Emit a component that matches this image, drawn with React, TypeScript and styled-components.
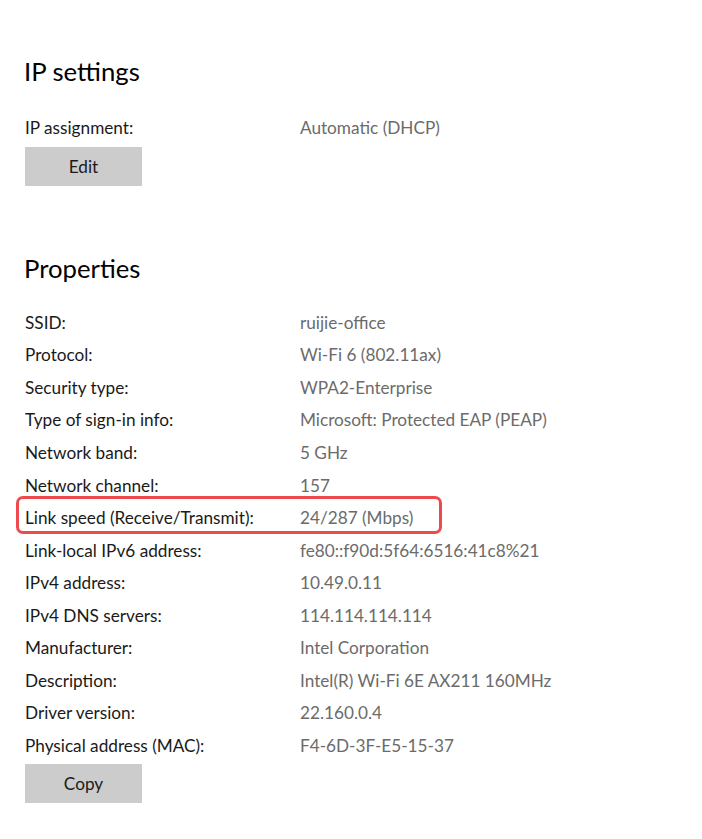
import styled, { createGlobalStyle } from "styled-components";

const GlobalStyle = createGlobalStyle`
  html, body {
    margin: 0;
    padding: 0;
    background: #ffffff;
  }
  body {
    font-family: Lato, "Open Sans", "Liberation Sans", sans-serif;
    color: #000000;
  }
`;

const Page = styled.div`
  padding: 53px 0 40px 25px;
  width: 702px;
  box-sizing: border-box;
`;

const Section = styled.section<{ $gap?: number }>`
  margin-bottom: ${(p) => p.$gap ?? 0}px;
`;

const Heading = styled.h2`
  margin: 0 0 0 -1px;
  font-size: 25.7px;
  font-weight: 400;
  line-height: 36px;
  height: 36px;
  color: #000;
`;

const Rows = styled.div<{ $top: number }>`
  display: flex;
  flex-direction: column;
  margin-top: ${(p) => p.$top}px;
`;

const Row = styled.div`
  position: relative;
  display: grid;
  grid-template-columns: 275px 1fr;
  height: 32.55px;
  align-items: center;
  font-size: 17.2px;
  padding-top: 1px;
  box-sizing: border-box;
`;

const Label = styled.span`
  color: #1a1a1a;
  position: relative;
`;

const Value = styled.span`
  color: #6b6b6b;
  position: relative;
`;

const Highlight = styled.div`
  position: absolute;
  left: -9px;
  top: -5px;
  width: 426px;
  height: 38px;
  box-sizing: border-box;
  border: 3.8px solid #ec4a4d;
  border-radius: 7px;
  pointer-events: none;
`;

const Button = styled.button`
  display: block;
  margin-top: 3px;
  width: 117px;
  height: 39px;
  border: none;
  background: #cccccc;
  font-family: inherit;
  font-size: 17.2px;
  color: #1a1a1a;
  padding: 0;
`;

type Prop = { label: string; value: string; marked?: boolean };

const properties: Prop[] = [
  { label: "SSID:", value: "ruijie-office" },
  { label: "Protocol:", value: "Wi-Fi 6 (802.11ax)" },
  { label: "Security type:", value: "WPA2-Enterprise" },
  { label: "Type of sign-in info:", value: "Microsoft: Protected EAP (PEAP)" },
  { label: "Network band:", value: "5 GHz" },
  { label: "Network channel:", value: "157" },
  { label: "Link speed (Receive/Transmit):", value: "24/287 (Mbps)", marked: true },
  { label: "Link-local IPv6 address:", value: "fe80::f90d:5f64:6516:41c8%21" },
  { label: "IPv4 address:", value: "10.49.0.11" },
  { label: "IPv4 DNS servers:", value: "114.114.114.114" },
  { label: "Manufacturer:", value: "Intel Corporation" },
  { label: "Description:", value: "Intel(R) Wi-Fi 6E AX211 160MHz" },
  { label: "Driver version:", value: "22.160.0.4" },
  { label: "Physical address (MAC):", value: "F4-6D-3F-E5-15-37" },
];

export default function App() {
  return (
    <>
      <GlobalStyle />
      <Page>
        <Section $gap={64}>
          <Heading>IP settings</Heading>
          <Rows $top={22}>
            <Row>
              <Label>IP assignment:</Label>
              <Value>Automatic (DHCP)</Value>
            </Row>
          </Rows>
          <Button>Edit</Button>
        </Section>

        <Section>
          <Heading>Properties</Heading>
          <Rows $top={20}>
            {properties.map((p) => (
              <Row key={p.label}>
                {p.marked && <Highlight />}
                <Label>{p.label}</Label>
                <Value>{p.value}</Value>
              </Row>
            ))}
          </Rows>
          <Button>Copy</Button>
        </Section>
      </Page>
    </>
  );
}
